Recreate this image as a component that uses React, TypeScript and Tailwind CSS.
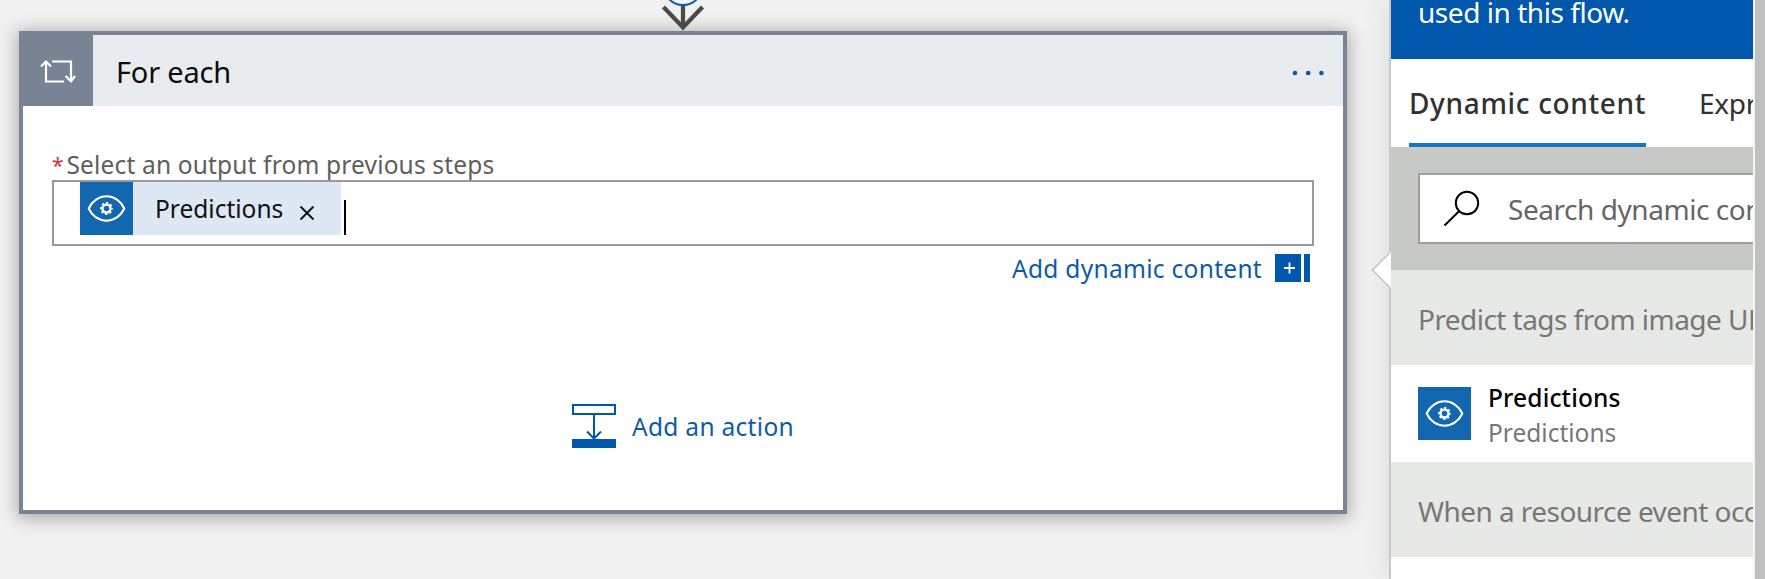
import React from "react";

function EyeIcon() {
  return (
    <svg viewBox="0 0 53 53" className="block size-[53px] shrink-0 bg-[#1267b0]" fill="none" stroke="#fff">
      <path d="M8.7 26.5C12 19 19 14.3 26.5 14.3S41 19 44.3 26.5C41 34 34 38.7 26.5 38.7S12 34 8.7 26.5Z" strokeWidth="2.1" strokeLinejoin="round" />
      <circle cx="26.5" cy="26.5" r="4" strokeWidth="2.4" />
      <circle cx="26.5" cy="26.5" r="5.6" strokeWidth="1.7" strokeDasharray="2.2 2.198" strokeDashoffset="1.1" />
    </svg>
  );
}

function LoopIcon() {
  return (
    <svg viewBox="0 0 36 24" className="block h-6 w-9" fill="none" stroke="#fff" strokeWidth="2.2">
      <path d="M12 2.5H31V22" />
      <path d="M25.5 17L31 22.3L35 17" />
      <path d="M24 22.5H6V3" />
      <path d="M1 7.5L6 2.5L11 7.5" />
    </svg>
  );
}

function AddContentIcon() {
  return (
    <svg viewBox="0 0 35 28" className="block h-7 w-[35px]">
      <path d="M0 0H26V28H0ZM29 0H35V28H29Z" fill="#0058ad" />
      <path d="M9 14H20M14.5 8.5V19.5" stroke="#fff" strokeWidth="1.8" />
    </svg>
  );
}

function AddActionIcon() {
  return (
    <svg viewBox="0 0 44 44" className="block size-11" fill="none" stroke="#0058ad" strokeWidth="2">
      <rect x="1" y="1" width="42" height="9" />
      <path d="M22 10V34M15 27.5L22 34.5L29 27.5" />
      <path d="M0 35H44V44H0Z" fill="#0058ad" stroke="none" />
    </svg>
  );
}

function ForEachCard() {
  return (
    <section className="mt-[31px] ml-[19px] flex h-[483px] w-[1328px] shrink-0 flex-col border-4 border-[#788493] bg-white shadow-[0_2px_16px_2px_rgba(0,0,0,0.3)]">
      <header className="flex h-[71px] shrink-0 bg-[#e8ecef]">
        <div className="flex w-[70px] items-center bg-[#788493] pl-[17px]">
          <LoopIcon />
        </div>
        <h1 className="pt-px pl-[23px] text-[29px] leading-[72px] tracking-[-0.2px] text-[#0c0c0c]">For each</h1>
        <svg viewBox="0 0 34 8" className="mt-[33.5px] mr-[17px] ml-auto h-2 w-[34px]" fill="#1353a0">
          <circle cx="3" cy="4" r="2.3" />
          <circle cx="16.2" cy="4" r="2.3" />
          <circle cx="29.4" cy="4" r="2.3" />
        </svg>
      </header>
      <div className="flex flex-col px-[29px] pt-[44px]">
        <label className="flex h-[30px] text-[24.5px] leading-[30px] whitespace-nowrap text-[#605e5c]">
          <span className="w-[14.5px] text-[21px] text-[#d92b3a]">*</span>
          <span className="tracking-[0.16px]">Select an output from previous steps</span>
        </label>
        <div className="flex h-[66px] w-[1262px] border-2 border-[#999] pl-[26px]">
          <div className="flex h-[53px] w-[261px] bg-[#dde8f4]">
            <EyeIcon />
            <span className="pl-[22px] text-[24.5px] leading-[53px] text-[#111]">Predictions</span>
            <svg viewBox="0 0 16 16" className="mt-[23px] ml-[16px] size-4" stroke="#111" strokeWidth="1.9">
              <path d="M1.5 1.5L14.5 14.5M14.5 1.5L1.5 14.5" />
            </svg>
          </div>
          <div className="mt-[18px] ml-[3px] h-[35px] w-0.5 bg-black" />
        </div>
        <div className="mt-2 flex w-[1258px] items-start justify-end text-[24.5px] leading-[29px] text-[#0f5aa8]">
          <span className="mr-[13px] tracking-[0.3px]">Add dynamic content</span>
          <AddContentIcon />
        </div>
        <div className="mt-[121px] ml-[520px] flex items-start text-[24.5px] leading-[46px] text-[#0f5aa8]">
          <AddActionIcon />
          <span className="ml-4 tracking-[0.3px]">Add an action</span>
        </div>
      </div>
    </section>
  );
}

function GroupHeader({ children }: { children: React.ReactNode }) {
  return (
    <div className="h-[95px] shrink-0 overflow-hidden bg-[#e6e9e6] pl-[27px] text-[28px] leading-[98px] tracking-[-0.55px] whitespace-nowrap text-[#797775]">
      {children}
    </div>
  );
}

function DynamicContentPanel() {
  return (
    <aside className="relative ml-[42px] flex w-[376px] shrink-0">
      <div className="flex h-full w-[366px] flex-col border-r-2 border-l-2 border-r-[#f5f5f5] border-l-[#c8c8c8] bg-white shadow-[-2px_0_26px_rgba(0,0,0,0.09)]">
        <div className="flex grow flex-col overflow-hidden">
          <div className="h-[59px] shrink-0 bg-[#0058ad] pl-[27px] text-[28px] leading-[25px] tracking-[-0.45px] whitespace-nowrap text-white">used in this flow.</div>
          <nav className="flex h-[88px] shrink-0 pl-[18px] text-[28px] leading-[89px] whitespace-nowrap text-[#323130]">
            <span className="h-[88px] w-[237px] shrink-0 border-b-4 border-[#1574c4] font-medium tracking-[0.65px]">Dynamic content</span>
            <span className="ml-[53px] tracking-[-0.3px]">Expression</span>
          </nav>
          <div className="h-[123px] shrink-0 bg-[#c7c9c6] pt-[26px] pl-[27px]">
            <div className="flex h-[71px] w-[420px] border-2 border-[#a09f9d] bg-white pl-[23px]">
              <svg viewBox="0 0 38 38" className="mt-[15px] size-[38px]" fill="none" stroke="#000" strokeWidth="2">
                <circle cx="24" cy="13" r="11.2" />
                <path d="M16 21.2L1.5 35.5" />
              </svg>
              <span className="ml-[27px] text-[28px] leading-[68px] tracking-[-0.45px] whitespace-nowrap text-[#666]">Search dynamic content</span>
            </div>
          </div>
          <GroupHeader>Predict tags from image URL</GroupHeader>
          <div className="flex h-[97px] shrink-0 pt-[22px] pl-[27px]">
            <EyeIcon />
            <div className="-mt-[7px] ml-[17px] flex flex-col text-[24.5px] leading-[35px]">
              <span className="font-medium tracking-[0.15px] text-black">Predictions</span>
              <span className="text-[#797775]">Predictions</span>
            </div>
          </div>
          <GroupHeader>When a resource event occurs</GroupHeader>
        </div>
      </div>
      <div className="w-[10px] bg-[#c0c0c0]" />
      <svg viewBox="0 0 20 38" className="absolute top-[251px] -left-[18px] h-[38px] w-5">
        <path d="M20 0.5L1.5 19L20 37.5Z" fill="#fff" />
        <path d="M19 1.5L1.5 19L19 36.5" fill="none" stroke="#c8c8c8" strokeWidth="1.7" />
      </svg>
    </aside>
  );
}

export default function App() {
  return (
    <main className="relative flex h-[579px] w-[1765px] overflow-hidden bg-[#f1f1f1] font-['Noto_Sans',sans-serif]">
      <ForEachCard />
      <DynamicContentPanel />
      <svg viewBox="0 0 46 31" className="absolute top-0 left-[660px] h-[31px] w-[46px]" fill="none">
        <path d="M23 4V28M3.5 7L23 27.5L42.5 7" stroke="#4a4a4a" strokeWidth="4.2" />
        <circle cx="23" cy="-14.5" r="19.5" fill="#f4f4f4" stroke="#0f5aa8" strokeWidth="2" />
      </svg>
    </main>
  );
}
